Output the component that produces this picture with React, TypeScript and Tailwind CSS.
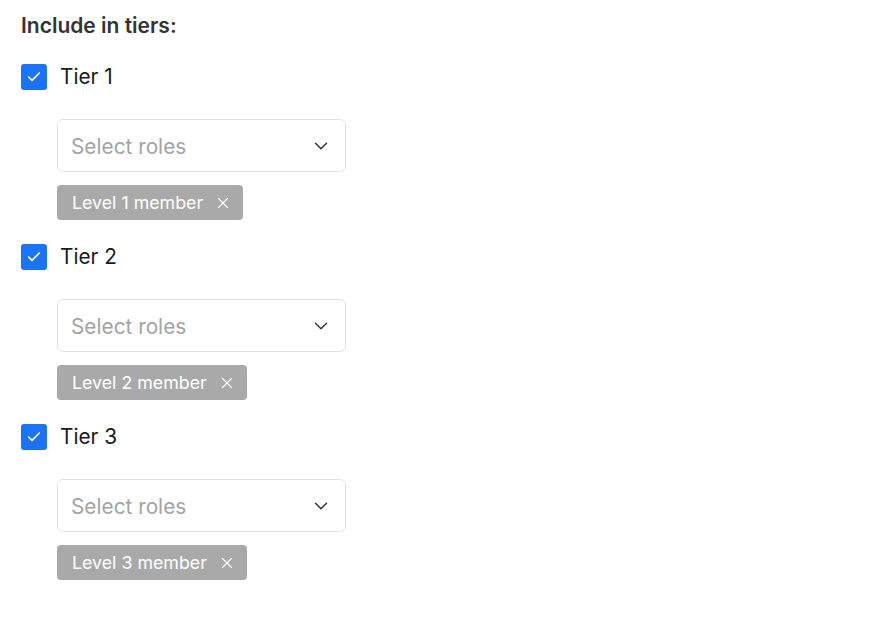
import { Check, ChevronDown, X } from 'lucide-react';

const tiers = [
	{ name: 'Tier 1', role: 'Level 1 member' },
	{ name: 'Tier 2', role: 'Level 2 member' },
	{ name: 'Tier 3', role: 'Level 3 member' },
];

function TierBlock({ name, role }: { name: string; role: string }) {
	return (
		<div className="flex flex-col">
			<label className="flex flex-row items-center gap-[13px] h-[27px]">
				<span className="flex items-center justify-center w-[26px] h-[26px] rounded-[3px] bg-[#1b74f5]">
					<Check className="w-[16px] h-[16px] text-white" strokeWidth={2.5} />
				</span>
				<span className="text-[20.8px] text-[#1a1a1a]">{name}</span>
			</label>
			<div className="ml-[36px] mt-[29px] flex flex-col items-start">
				<button className="flex flex-row items-center justify-between w-[289px] h-[53px] pl-[13px] pr-[13px] border border-[#e2e2e2] rounded-[6px] bg-white">
					<span className="text-[20.8px] text-[#a3a3a3] pt-[2px]">Select roles</span>
					<ChevronDown className="w-[22px] h-[22px] text-[#333]" strokeWidth={1.6} />
				</button>
				<div className="mt-[13px] flex flex-row items-center gap-[11px] h-[35px] pl-[15px] pr-[11px] rounded-[4px] bg-[#a9a9a9]">
					<span className="text-[17.8px] text-white pt-[1px]">{role}</span>
					<X className="w-[18px] h-[18px] text-white" strokeWidth={1.5} />
				</div>
			</div>
		</div>
	);
}

export default function App() {
	return (
		<div
			className="min-h-screen bg-white pl-[21px] pt-[12px]"
			style={{ fontFamily: 'Inter, "Noto Sans", sans-serif' }}
		>
			<h2 className="font-semibold text-[21px] leading-[28px] text-[#333]">Include in tiers:</h2>
			<div className="mt-[23px] flex flex-col gap-[23px]">
				{tiers.map((t) => (
					<TierBlock key={t.name} name={t.name} role={t.role} />
				))}
			</div>
		</div>
	);
}
